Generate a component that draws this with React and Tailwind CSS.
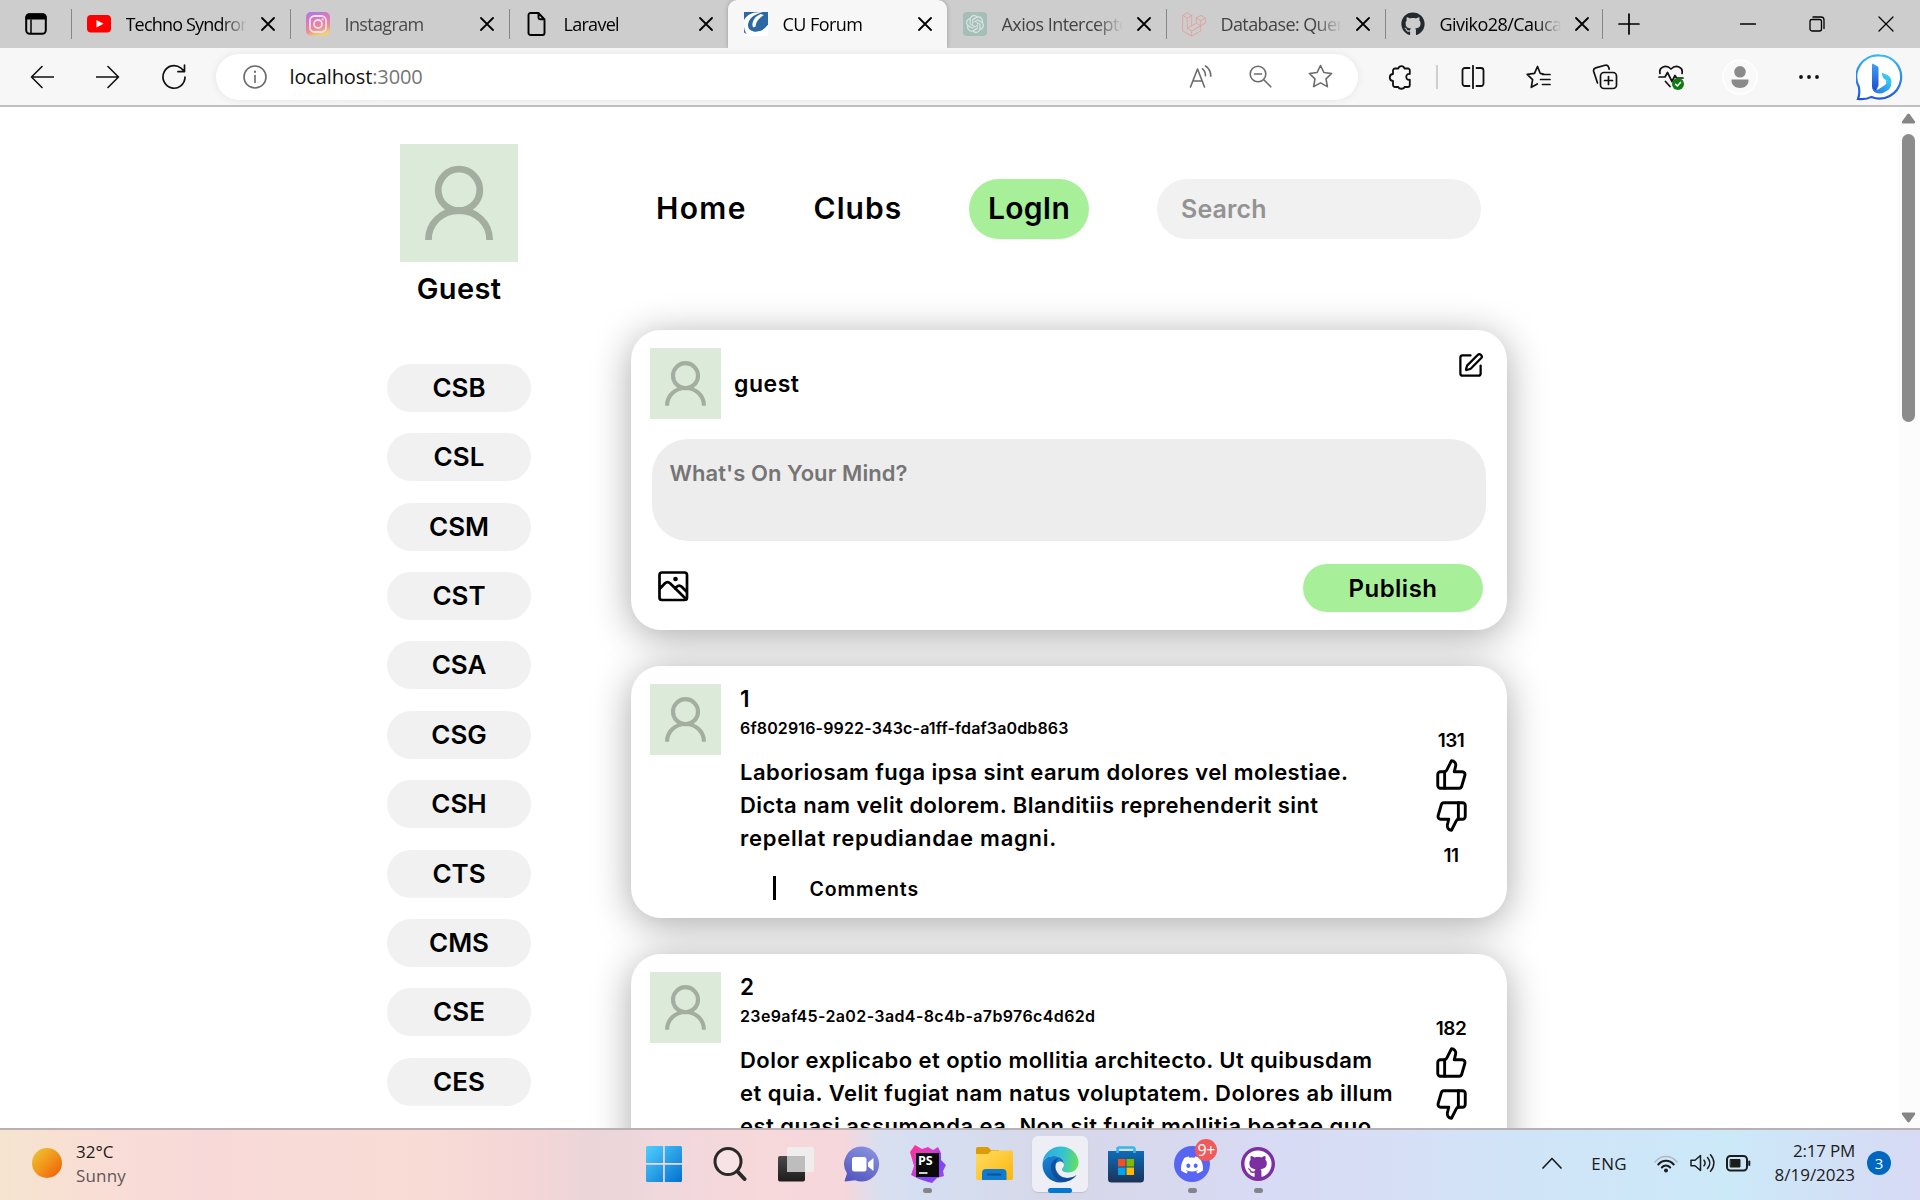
import React from "react";
import { SquarePen, ThumbsUp, ThumbsDown } from "lucide-react";
import { FaGithub, FaLaravel, FaDiscord } from "react-icons/fa";
import { SiOpenai } from "react-icons/si";

/* ---------- small shared drawings ---------- */

function Line({ children, w, h, box, sw = 1.7, className = "" }) {
  return (
    <svg
      width={w}
      height={h}
      viewBox={box || `0 0 ${w} ${h}`}
      fill="none"
      stroke="currentColor"
      strokeWidth={sw}
      strokeLinecap="round"
      strokeLinejoin="round"
      className={`block shrink-0 ${className}`}
    >
      {children}
    </svg>
  );
}

const Cross = () => (
  <Line w={14} h={14} sw={1.8} className="text-black">
    <path d="M1 1l12 12M13 1L1 13" />
  </Line>
);

function Avatar({ className }) {
  return (
    <svg viewBox="0 0 118 118" className={`block shrink-0 bg-[#dcead9] ${className}`} fill="none" stroke="#a3aea1" strokeWidth="6.8">
      <ellipse cx="59" cy="46" rx="20.8" ry="20.8" />
      <path d="M28.400 96c0-17 13.500-29.500 30.600-29.500s30.600 12.500 30.600 29.500" />
    </svg>
  );
}

/* ---------- browser chrome ---------- */

const YoutubeIcon = () => (
  <svg width="24" height="18" viewBox="0 0 24 18" className="block">
    <rect width="24" height="17.500" rx="4" fill="#f00" />
    <path d="M9.500 5l7 3.800-7 3.800z" fill="#fff" />
  </svg>
);

const InstagramIcon = () => (
  <svg width="24" height="24" viewBox="0 0 24 24" className="block">
    <defs>
      <linearGradient id="ig" x1="0.100" y1="0" x2="0.400" y2="1">
        <stop offset="0" stopColor="#a77be8" />
        <stop offset="0.450" stopColor="#e579b4" />
        <stop offset="0.750" stopColor="#ea8f93" />
        <stop offset="1" stopColor="#ecd07c" />
      </linearGradient>
    </defs>
    <rect width="24" height="24" rx="5" fill="url(#ig)" />
    <g fill="none" stroke="#f4dfe6" strokeWidth="1.800">
      <rect x="4" y="4" width="16" height="16" rx="4.500" />
      <circle cx="12" cy="12" r="4" />
    </g>
    <circle cx="16.600" cy="7.400" r="1.100" fill="#f4dfe6" />
  </svg>
);

const FileIcon = () => (
  <Line w={19} h={24} sw={1.9} className="text-black">
    <path d="M3.500 1h8l6 6.500V21a2 2 0 0 1-2 2h-12a2 2 0 0 1-2-2V3a2 2 0 0 1 2-2zM11.500 1v4.800a1.500 1.500 0 0 0 1.500 1.500h4.500" />
  </Line>
);

const ForumIcon = () => (
  <svg width="24" height="24" viewBox="0 0 24 24" className="block">
    <rect width="24" height="24" fill="#2c68a3" />
    <path d="M0 8C3 3 8 .5 14 .3h4.500C12 1.800 6.500 5 4.600 10c-1.700 4.500.2 8.600 4.600 9.300 4.500.7 9.300-.8 12-3.700L24 12.500V24H0v-3.500l3 1.700C1 20 0 17 0 13.500z" fill="#fff" />
    <path d="M24 0v12.500l-2.800 3.100c-2.700 2.900-7.500 4.400-12 3.700l3-2.300c4.500-1 7.300-8 8.600-13.800L22 0z" fill="#2c68a3" />
    <path d="M8.500 14C8 9 11 4 17 2l2.800 1.200C15 6 12 9.500 11.600 14.500c-1 1.300-2.700 1-3.100-.5z" fill="#fff" />
  </svg>
);

const AxiosIcon = () => (
  <span className="flex size-6 items-center justify-center rounded-[4px] bg-[#a4bfb7]">
    <SiOpenai className="size-[18px] text-[#dde5e2]" />
  </span>
);

const tabs = [
  { icon: <YoutubeIcon />, text: "Techno Syndrome", cls: "text-black tracking-[-0.045em]", sep: true },
  { icon: <InstagramIcon />, text: "Instagram", cls: "text-[#4a4a4a] tracking-[-0.036em]", sep: true },
  { icon: <FileIcon />, text: "Laravel", cls: "text-black tracking-[-0.040em]", sep: true },
  { icon: <ForumIcon />, text: "CU Forum", cls: "text-black tracking-[-0.030em]", active: true },
  { icon: <AxiosIcon />, text: "Axios Interceptors", cls: "text-[#444] tracking-[-0.030em]" },
  { icon: <FaLaravel className="size-[25px] text-[#e39d97]" />, text: "Database: Query", cls: "text-[#444] tracking-[-0.033em]", sep: true },
  { icon: <FaGithub className="size-6 text-[#24292e]" />, text: "Giviko28/Caucasus", cls: "text-black tracking-[-0.030em]", sep: true },
];

function Tab({ icon, text, cls, sep, active }) {
  return (
    <div
      className={`flex h-12 w-[219px] shrink-0 items-center last-of-type:w-[217px] ${active ? "rounded-t-[9px] bg-[#f7f7f7] shadow-[0_0_4px_rgba(0,0,0,0.25)]" : ""}`}
    >
      <span className={`h-[30px] w-[1.500px] ${sep ? "bg-[#858585]" : ""}`} />
      <span className="ml-[14.500px] flex w-6 justify-center">{icon}</span>
      <span
        className={`ml-[15px] w-[121px] overflow-hidden whitespace-nowrap text-[18px] leading-6 ${cls} [mask-image:linear-gradient(to_right,black_78%,transparent)]`}
      >
        {text}
      </span>
      <span className="ml-[14px]">
        <Cross />
      </span>
    </div>
  );
}

function TabBar() {
  return (
    <div className="flex h-12 items-center bg-[#cdcdcd]">
      <div className="flex w-[70.500px] shrink-0 pl-[25px]">
        <Line w={22} h={22} sw={2}>
          <rect x="1.200" y="1.200" width="19.600" height="19.600" rx="3.500" />
          <path d="M1.500 5.500V4a2.500 2.500 0 0 1 2.500-2.500h14A2.500 2.500 0 0 1 20.500 4v1.500z" fill="currentColor" />
          <path d="M6 7v13" strokeWidth="1.500" />
        </Line>
      </div>
      <div className="flex">
        {tabs.map((t) => (
          <Tab key={t.text} {...t} />
        ))}
      </div>
      <span className="h-[30px] w-[1.500px] bg-[#858585]" />
      <Line w={22} h={22} sw={1.7} className="ml-[15px]">
        <path d="M11 1v20M1 11h20" />
      </Line>
      <div className="ml-auto flex items-center pr-[26px]">
        <Line w={16} h={16} sw={1.3}>
          <path d="M.5 8h15" />
        </Line>
        <Line w={16} h={16} sw={1.3} className="ml-[53px]">
          <rect x="1" y="3.500" width="11.500" height="11.500" rx="2" />
          <path d="M4 1h8a3 3 0 0 1 3 3v8.500" />
        </Line>
        <Line w={16} h={16} sw={1.3} className="ml-[53px]">
          <path d="M1 1l14 14M15 1L1 15" />
        </Line>
      </div>
    </div>
  );
}

const BingIcon = () => (
  <svg width="48" height="50" viewBox="0 0 48 50" className="block">
    <defs>
      <linearGradient id="bingRing" x1="0.500" y1="0" x2="0.400" y2="1">
        <stop offset="0" stopColor="#35b8f4" />
        <stop offset="1" stopColor="#2156d9" />
      </linearGradient>
      <linearGradient id="bingStem" x1="0" y1="0" x2="0" y2="1">
        <stop offset="0" stopColor="#3ea2f2" />
        <stop offset="1" stopColor="#1d46cf" />
      </linearGradient>
      <linearGradient id="bingBowl" x1="1" y1="0.200" x2="0" y2="1">
        <stop offset="0" stopColor="#37c6ee" />
        <stop offset="1" stopColor="#2b6be6" />
      </linearGradient>
    </defs>
    <path d="M24 2.500a21.500 21.500 0 1 1-8.500 41.400C11.500 46 6.500 46.500 2 46c1.500-3.500 1.700-7 .9-12A21.500 21.500 0 0 1 24 2.500z" fill="#fff" stroke="url(#bingRing)" strokeWidth="2.200" />
    <path d="M16.500 10.500l5 2.700c.8.500 1 1 1 2v17l-3 7c-2-.8-3.500-3-3.500-6V11.500z" fill="url(#bingStem)" />
    <path d="M25.500 19.500l5.500 2.600c4 2 5.200 5.400 4 9.500-1.200-3-3-3.800-5.500-4.900-1.500-.6-2.200-1.500-2.700-3z" fill="#36c5f0" />
    <path d="M16.500 34c.7 3 3 4 6 2.300l6.500-4.200c1.800-1.400 1.600-3.400.4-5.400 4 1 6.300 3 5.600 6.200-1 3-3.500 4.700-6.500 6.400-3 1.700-6.500 1.500-9 .2-2-1.200-3-3.200-3-5.500z" fill="url(#bingBowl)" />
  </svg>
);

function Toolbar() {
  return (
    <div className="flex h-[59px] items-center border-b-2 border-[#bfbfbf] bg-[#f7f7f7] text-[#111]">
      <div className="flex w-[216px] shrink-0 items-center gap-[42px] pl-[30px]">
        <Line w={24} h={24} sw={1.6}>
          <path d="M12 1.500L1.500 12 12 22.500M1.500 12H23.500" />
        </Line>
        <Line w={24} h={24} sw={1.6}>
          <path d="M12 1.500L22.500 12 12 22.500M22.500 12H.500" />
        </Line>
        <Line w={25} h={26} sw={1.7}>
          <path d="M23 13A11 11.300 0 1 1 19 4.200l3.500 3.300M22.500 1v6.600h-6.600" />
        </Line>
      </div>
      <div className="flex h-[46px] w-[1142px] shrink-0 items-center rounded-full bg-white pl-[27px] pr-[25px] text-[#6b6b6b] shadow-[0_0_8px_rgba(0,0,0,0.08)]">
        <Line w={24} h={24} sw={1.6}>
          <circle cx="12" cy="12" r="11" />
          <path d="M12 10.500v7" />
          <path d="M12 6.500v.6" strokeWidth="2" />
        </Line>
        <span className="ml-[22.500px] text-[20px] leading-6 tracking-[-0.006em] text-[#757575]">
          <span className="text-[#111]">localhost</span>:3000
        </span>
        <div className="ml-auto flex items-center">
          <Line w={24} h={24} sw={1.6}>
            <path d="M1.500 22L8.500 4l7 18M4.200 16h8.600M13.500 3.800c2 1.500 3 4 3 7M16.500 1c3.500 2.300 5.300 6 5.300 10.300" />
          </Line>
          <Line w={23} h={23} sw={1.6} className="ml-9">
            <circle cx="9" cy="9" r="7.800" />
            <path d="M14.800 14.800l7 7M5.500 9h7" />
          </Line>
          <Line w={25} h={25} sw={1.6} className="ml-[36px]">
            <path d="M12.500 1.500l3.400 7 7.700 1-5.600 5.400 1.400 7.700-6.900-3.700-6.900 3.700L7 14.900 1.400 9.500l7.700-1z" />
          </Line>
        </div>
      </div>
      <div className="flex flex-1 items-center pl-[30px]">
        <Line w={25} h={26} sw={1.8}>
          <path d="M7 4.500h3.300a3.200 3.200 0 0 1 6.200 0H20a1.800 1.800 0 0 1 1.800 1.800V10c-4.500-1-5 6.600 0 5.700V21a2 2 0 0 1-2 2H16.500c-.5 2.300-5.700 2.300-6.200 0H7a2 2 0 0 1-2-2v-4.200c-4.300-.2-4.300-6.600 0-6.800V6.500a2 2 0 0 1 2-2z" />
        </Line>
        <span className="ml-[23px] h-6 w-[1.500px] bg-[#cfcfcf]" />
        <Line w={24} h={24} sw={1.8} className="ml-[23px]">
          <path d="M8.500 3H4a2.500 2.500 0 0 0-2.500 2.500v13A2.500 2.500 0 0 0 4 21h4.500M15.500 3H20a2.500 2.500 0 0 1 2.500 2.500v13A2.500 2.500 0 0 1 20 21h-4.500M12 .8v22.400" />
        </Line>
        <Line w={26} h={24} sw={1.7} className="ml-[41px]">
          <path d="M17.500 9l-3.300-.7L11.500 1.500 8.500 8.300l-7.300 1 5.400 5.300-1.300 7.700 6-3.400M16.500 9.500H24M14.500 14.500H24M16.500 19.500H24" />
        </Line>
        <Line w={26} h={26} sw={1.7} className="ml-[40px]">
          <rect x="8.500" y="8.500" width="16" height="16" rx="3.500" />
          <path d="M16.500 12.500v8M12.500 16.500h8M5.500 19l-3.800-11.500a3 3 0 0 1 2-3.600L13 1.200a3 3 0 0 1 3.700 2l.5 2" />
        </Line>
        <Line w={26} h={26} sw={1.7} className="ml-[40px]">
          <path d="M12 22.500L7.500 17.500M2 9.500C.5 3 8 0 13 5c5-5 12.500-2 11 4.500M1 13h6l2.500-4.500 4.500 9 3-6 1.500 2.500H25" />
          <circle cx="20" cy="20" r="6" fill="#107c10" stroke="none" />
          <path d="M17.500 20.200l1.800 1.800 3.200-3.600" stroke="#fff" strokeWidth="1.500" />
        </Line>
        <svg width="36" height="36" viewBox="0 0 36 36" className="ml-[38px] block">
          <circle cx="18" cy="18" r="17" fill="#f9f9f9" stroke="#fff" strokeWidth="1.500" />
          <circle cx="18" cy="12.800" r="5.800" fill="#8a8a8a" />
          <path d="M9.500 20.500h17v1.500c0 4.200-4 7-8.500 7s-8.500-2.800-8.500-7z" fill="#8a8a8a" />
        </svg>
        <svg width="22" height="6" viewBox="0 0 22 6" className="ml-[40px] block" fill="#111">
          <circle cx="3" cy="3" r="1.900" />
          <circle cx="11" cy="3" r="1.900" />
          <circle cx="19" cy="3" r="1.900" />
        </svg>
        <span className="mt-0.5 ml-[36px]">
          <BingIcon />
        </span>
      </div>
    </div>
  );
}

/* ---------- page ---------- */

const clubs = ["CSB", "CSL", "CSM", "CST", "CSA", "CSG", "CSH", "CTS", "CMS", "CSE", "CES"];

function Sidebar() {
  return (
    <aside className="flex w-36 shrink-0 flex-col items-center pt-[37px]">
      <Avatar className="size-[118px]" />
      <p className="mt-[11px] text-[29px] leading-8 tracking-[0.012em]">Guest</p>
      <ul className="mt-[58.700px] flex flex-col gap-[21.430px]">
        {clubs.map((c) => (
          <li key={c} className="flex h-12 w-36 items-center justify-center rounded-full bg-[#f1f1f1] text-[26px]">
            {c}
          </li>
        ))}
      </ul>
    </aside>
  );
}

function Nav() {
  return (
    <nav className="flex h-[60px] items-center text-[30px]">
      <a className="ml-[25px] w-[90px] pb-0.5 tracking-[0.045em]">Home</a>
      <a className="ml-[67.500px] w-[88px] pb-0.5 tracking-[0.036em]">Clubs</a>
      <a className="ml-[67.500px] flex h-[60px] w-[120px] items-center justify-center rounded-full bg-[#a8ef99] pb-0.5 tracking-[0.010em]">LogIn</a>
      <span className="ml-[68px] flex h-[60px] w-[324px] items-center rounded-full bg-[#f1f1f1] pl-6 text-[25px] tracking-[0.006em] text-[#939393]">Search</span>
    </nav>
  );
}

const card = "rounded-[30px] bg-white px-[18px] pb-[18px] shadow-[0_6px_38px_rgba(0,0,0,0.34)]";

function Composer() {
  return (
    <section className={`flex h-[300px] flex-col pt-[18px] ${card}`}>
      <header className="flex items-center pl-px">
        <Avatar className="size-[71px]" />
        <span className="ml-[13px] text-[23px] leading-7 tracking-[0.023em]">guest</span>
        <SquarePen className="mr-[5px] ml-auto mt-1 size-[27px] self-start" strokeWidth={2} />
      </header>
      <div className="mx-[3px] mt-5 h-[102px] rounded-[36px] bg-[#ededed] px-[17.500px] pt-5 text-[22px] leading-7 tracking-[0.003em] text-[#757575]">
        What's On Your Mind?
      </div>
      <footer className="mt-[23px] flex items-center justify-between pr-1.5 pl-[9px]">
        <Line w={31} h={31} box="0 0 31 31" sw={2.7} className="mb-1">
          <rect x="1.500" y="1.500" width="27.500" height="27.500" rx="2.500" />
          <path d="M2 17.500l5-5.200c1.500-1.400 3.500-1.400 5 0L28 28M17 17.500l1.700-1.700c1.500-1.400 3.500-1.400 5 0l5 5" />
          <circle cx="17.500" cy="8" r="1" fill="currentColor" />
        </Line>
        <button className="flex h-12 w-[180px] items-center justify-center rounded-full bg-[#a8ef99] pt-0.5 text-[24px] tracking-[0.020em]">
          Publish
        </button>
      </footer>
    </section>
  );
}

const posts = [
  {
    id: "1",
    uuid: "6f802916-9922-343c-a1ff-fdaf3a0db863",
    uuidCls: "tracking-[0.009em]",
    up: 131,
    down: 11,
    lines: [
      ["Laboriosam fuga ipsa sint earum dolores vel molestiae.", "tracking-[0.0204em]"],
      ["Dicta nam velit dolorem. Blanditiis reprehenderit sint", "tracking-[0.0202em]"],
      ["repellat repudiandae magni.", "tracking-[0.034em]"],
    ],
  },
  {
    id: "2",
    uuid: "23e9af45-2a02-3ad4-8c4b-a7b976c4d62d",
    uuidCls: "tracking-[0.0238em]",
    up: 182,
    down: 24,
    lines: [
      ["Dolor explicabo et optio mollitia architecto. Ut quibusdam", "tracking-[0.0203em]"],
      ["et quia. Velit fugiat nam natus voluptatem. Dolores ab illum", "tracking-[0.0235em]"],
      ["est quasi assumenda ea. Non sit fugit mollitia beatae quo", "tracking-[0.0215em]"],
    ],
  },
];

function Post({ id, uuid, uuidCls, up, down, lines }) {
  return (
    <article className={`flex h-[252px] shrink-0 pt-[18px] ${card}`}>
      <Avatar className="ml-px size-[71px]" />
      <div className="ml-[19px] flex w-[676px] flex-col whitespace-nowrap">
        <h2 className="mt-[3px] text-[22.500px] leading-6">{id}</h2>
        <p className={`mt-[7px] text-[16px] leading-5 ${uuidCls}`}>{uuid}</p>
        <div className="mt-[18px] text-[22px] leading-[33px]">
          {lines.map(([text, cls]) => (
            <p key={text} className={cls}>
              {text}
            </p>
          ))}
        </div>
        <div className="mt-[21px] ml-[33px] border-l-3 border-black pl-[33.500px] text-[19.500px] leading-6 tracking-[0.047em]">
          <span className="block translate-y-px">Comments</span>
        </div>
      </div>
      <div className="ml-[15px] flex w-10 flex-col items-center pt-[47px] text-[19px] leading-5 tracking-[-0.030em]">
        <span>{up}</span>
        <ThumbsUp className="mt-[6.500px] size-[33px]" strokeWidth={2.1} />
        <ThumbsDown className="mt-[9.500px] size-[33px]" strokeWidth={2.1} />
        <span className="mt-[13px]">{down}</span>
      </div>
    </article>
  );
}

function Scrollbar() {
  return (
    <div className="flex w-[22px] shrink-0 flex-col items-center bg-[#fcfcfc] pt-[6px] pr-0.5 pb-[5px]">
      <svg width="15" height="11" viewBox="0 0 15 11" className="block" fill="#858585">
        <path d="M6.300 1.200a1.500 1.500 0 0 1 2.400 0L14 8.500c.5 1 0 2-1 2H2c-1 0-1.500-1-1-2z" />
      </svg>
      <span className="mt-[10px] h-[288px] w-[13px] rounded-full bg-[#8b8b8b]" />
      <svg width="15" height="11" viewBox="0 0 15 11" className="mt-auto block" fill="#858585">
        <path d="M6.300 9.800a1.500 1.500 0 0 0 2.400 0L14 2.500c.5-1 0-2-1-2H2c-1 0-1.500 1-1 2z" />
      </svg>
    </div>
  );
}

/* ---------- task bar ---------- */

const StartIcon = () => (
  <svg width="36" height="36" viewBox="0 0 36 36" className="block">
    <defs>
      <linearGradient id="win" gradientUnits="userSpaceOnUse" x1="0" y1="0" x2="36" y2="36">
        <stop offset="0" stopColor="#4fd0ff" />
        <stop offset="1" stopColor="#0470cf" />
      </linearGradient>
    </defs>
    <path d="M1.500 0h15.600v17.100H0V1.500A1.500 1.500 0 0 1 1.500 0zM18.800 0h15.700A1.500 1.500 0 0 1 36 1.500v15.600H18.800zM0 18.800h17.100V36H1.500A1.500 1.500 0 0 1 0 34.500zM18.800 18.800H36v15.700a1.500 1.500 0 0 1-1.500 1.500H18.800z" fill="url(#win)" />
  </svg>
);

const SearchIcon = () => (
  <svg width="34" height="36" viewBox="0 0 34 36" className="block" fill="none" stroke="#292929">
    <circle cx="15" cy="15.500" r="13" strokeWidth="3" fill="#ffffff" fillOpacity="0.250" />
    <path d="M24.500 25.500l7 7.500" strokeWidth="4" strokeLinecap="round" />
  </svg>
);

const TaskViewIcon = () => (
  <svg width="36" height="36" viewBox="0 0 36 36" className="block">
    <defs>
      <linearGradient id="tv" x1="0" y1="0" x2="0" y2="1">
        <stop offset="0" stopColor="#4a4a4a" />
        <stop offset="1" stopColor="#1d1d1d" />
      </linearGradient>
    </defs>
    <rect x="0" y="10" width="27" height="25.500" rx="2" fill="url(#tv)" />
    <rect x="9" y="1" width="27" height="25" rx="2" fill="#f0f0f0" fillOpacity="0.900" />
    <rect x="9" y="10" width="18" height="16" fill="#bdbdbd" />
  </svg>
);

const ChatIcon = () => (
  <svg width="36" height="36" viewBox="0 0 36 36" className="block">
    <defs>
      <linearGradient id="chat" x1="0.800" y1="0" x2="0.300" y2="1">
        <stop offset="0" stopColor="#8b93e0" />
        <stop offset="1" stopColor="#5557c0" />
      </linearGradient>
    </defs>
    <path d="M18 .500A17.500 17.500 0 1 1 11 34.200L1.500 35.500c-.6 0-1-.5-.8-1.200L3 27.500A17.500 17.500 0 0 1 18 .500z" fill="url(#chat)" />
    <rect x="8" y="11" width="14.500" height="14.500" rx="2.500" fill="#fff" />
    <path d="M24 16.500l5.500-4.500v13L24 20.500z" fill="#fff" />
  </svg>
);

const StormIcon = () => (
  <svg width="38" height="38" viewBox="0 0 38 38" className="block">
    <defs>
      <linearGradient id="ps" x1="0" y1="0" x2="1" y2="1">
        <stop offset="0" stopColor="#ff318c" />
        <stop offset="0.400" stopColor="#d63ed0" />
        <stop offset="0.650" stopColor="#7a45f5" />
        <stop offset="1" stopColor="#b345f1" />
      </linearGradient>
    </defs>
    <path d="M1 7L6 0l7 4 6-2 5 3 5-3 3 6v7l5 5-3 6 1 5-7 2-5 5-4-1-9-3-8-4 3-9z" fill="url(#ps)" />
    <rect x="7" y="8" width="23" height="24" fill="#0a0a0a" />
    <text x="9" y="20" fontFamily="Open Sans, sans-serif" fontWeight="700" fontSize="12.500" fill="#fff">PS</text>
    <path d="M10 28h8.500" stroke="#fff" strokeWidth="1.600" />
  </svg>
);

const FolderIcon = () => (
  <svg width="37" height="34" viewBox="0 0 37 34" className="block">
    <defs>
      <linearGradient id="fold" x1="0" y1="0" x2="1" y2="1">
        <stop offset="0" stopColor="#ffdd63" />
        <stop offset="1" stopColor="#fbb50b" />
      </linearGradient>
    </defs>
    <path d="M0 2a2 2 0 0 1 2-2h9c1.500 0 2.500 1.500 4 3h8v8H0z" fill="#dd9c06" />
    <path d="M0 7h12l3.500-3.500H35a2 2 0 0 1 2 2V31a2 2 0 0 1-2 2H2a2 2 0 0 1-2-2z" fill="url(#fold)" />
    <path d="M6 33v-7a4 4 0 0 1 4-4h16.500a4 4 0 0 1 4 4v7z" fill="#0f7bd0" />
    <path d="M12 27.500h12.500" stroke="#0a5294" strokeWidth="2" strokeLinecap="round" />
  </svg>
);

const EdgeIcon = () => (
  <svg width="37" height="37" viewBox="0 0 37 37" className="block">
    <defs>
      <linearGradient id="edgeTop" x1="0" y1="0.400" x2="1" y2="0.500">
        <stop offset="0" stopColor="#2aa9de" />
        <stop offset="0.550" stopColor="#35c3d0" />
        <stop offset="1" stopColor="#66e05c" />
      </linearGradient>
      <linearGradient id="edgeLow" x1="0" y1="0" x2="0.700" y2="1">
        <stop offset="0" stopColor="#1b87d8" />
        <stop offset="1" stopColor="#0c4f9f" />
      </linearGradient>
    </defs>
    <path d="M.600 17A18 18 0 0 1 18.500.500C29 .500 36.500 8 36.500 16.500c0 6-4.500 10-10 10-4 0-6.500-1.300-6.500-3 0-1.500 2-2 2-5.500 0-4.500-4.500-8-10-8C6 10 1.500 13 .600 17z" fill="url(#edgeTop)" />
    <path d="M.500 18.500C.800 13 6 10 12 10c5.500 0 10 3.500 10 8-1-2-2.500-2.500-4-2.500-4 0-5.500 4-4.500 8 1.200 5 6 8.500 11.500 8.500 3.500 0 7-1.200 9.500-3C31 33.500 25 36.500 18.500 36.500 8 36.500.500 28.500.500 18.500z" fill="url(#edgeLow)" />
    <path d="M9 20c.5-4.500 4-7.500 7.500-7.500-2 1.500-3.500 5-3 9 .8 5.800 6 10.500 12 10.500 3.500 0 7-1.200 9-3-3 4.500-8 6.500-12.500 6.500C14 35.500 8.400 27 9 20z" fill="#0b4a94" fillOpacity="0.750" />
  </svg>
);

const StoreIcon = () => (
  <svg width="36" height="37" viewBox="0 0 36 37" className="block">
    <defs>
      <linearGradient id="store" x1="0" y1="0" x2="0" y2="1">
        <stop offset="0" stopColor="#0e6cb8" />
        <stop offset="1" stopColor="#1c3258" />
      </linearGradient>
    </defs>
    <path d="M9.500 7V3a1.500 1.500 0 0 1 1.500-1.500h14A1.500 1.500 0 0 1 26.500 3v4" fill="none" stroke="#36b6ee" strokeWidth="2.600" />
    <path d="M0 5h36v28a3.500 3.500 0 0 1-3.500 3.500h-29A3.500 3.500 0 0 1 0 33z" fill="url(#store)" />
    <path d="M9.500 7V4.500M26.500 7V4.500" stroke="#36b6ee" strokeWidth="2.600" />
    <rect x="10" y="13" width="7.500" height="7.500" fill="#f25022" />
    <rect x="18.500" y="13" width="7.500" height="7.500" fill="#7fba00" />
    <rect x="10" y="21.500" width="7.500" height="7.500" fill="#00a4ef" />
    <rect x="18.500" y="21.500" width="7.500" height="7.500" fill="#ffb900" />
  </svg>
);

const DiscordIcon = () => (
  <span className="relative flex size-9 items-center justify-center rounded-full bg-[#5865f2]">
    <FaDiscord className="mt-0.5 size-6 text-white" />
    <span className="absolute -top-[7px] -right-[7px] flex size-[22px] items-center justify-center rounded-full bg-[#f05a5a] text-[16px] leading-none tracking-tight text-white">
      9+
    </span>
  </span>
);

const GithubDesktopIcon = () => (
  <span className="flex size-[34px] items-center justify-center rounded-full bg-[#7b2fa0]">
    <FaGithub className="size-7 text-white" />
  </span>
);

const apps = [
  { name: "start", icon: <StartIcon /> },
  { name: "search", icon: <SearchIcon /> },
  { name: "tasks", icon: <TaskViewIcon /> },
  { name: "chat", icon: <ChatIcon /> },
  { name: "phpstorm", icon: <StormIcon />, open: true },
  { name: "files", icon: <FolderIcon /> },
  { name: "edge", icon: <EdgeIcon />, active: true },
  { name: "store", icon: <StoreIcon /> },
  { name: "discord", icon: <DiscordIcon />, open: true },
  { name: "github", icon: <GithubDesktopIcon />, open: true },
];

function Taskbar() {
  return (
    <footer className="flex h-[72px] shrink-0 border-t-2 border-[#b9b0b4] bg-[linear-gradient(90deg,#f6e4cf_0px,#f9ddd6_110px,#f8d9d9_200px,#f9dcd5_400px,#f5d6d7_520px,#ead5d9_600px,#f0d8dc_660px,#f7d8db_760px,#f5d7dc_845px,#d9dfef_880px,#d5dff2_920px,#d5ddef_960px,#d6d7e8_1060px,#d8daf3_1240px,#d6dff5_1400px,#d0e4f8_1520px,#cce9f8_1730px,#d2e0f6_1840px,#d7daf4_1920px)] text-[17px] leading-6 text-[#1c1c1c]">
      <div className="flex w-[630.500px] shrink-0 pl-8 pt-[17px]">
        <span className="mt-px size-[30px] rounded-full bg-[linear-gradient(135deg,#ecc435_5%,#f29a1c_45%,#f06a0d_85%)]" />
        <div className="-mt-[7px] ml-[14px]">
          <p>32°C</p>
          <p className="text-[#5f5857] tracking-[0.010em]">Sunny</p>
        </div>
      </div>
      <div className="flex">
        {apps.map(({ name, icon, open, active }) => (
          <div key={name} className="flex w-[66.100px] flex-col items-center pt-1.5">
            <div className={`flex h-14 w-14 flex-col items-center rounded-md ${active ? "bg-[#edeef6] shadow-[0_1px_1px_rgba(0,0,0,0.12)]" : ""}`}>
              <span className="flex h-[56px] shrink-0 items-center">{icon}</span>
              {open && <span className="-mt-[4px] h-[5px] w-[9px] shrink-0 rounded-full bg-[#83848c]" />}
              {active && <span className="-mt-[4px] h-[5px] w-6 shrink-0 rounded-full bg-[#0078d4]" />}
            </div>
          </div>
        ))}
      </div>
      <div className="ml-auto flex items-center pr-[29px] pb-1">
        <Line w={20} h={12} sw={1.7}>
          <path d="M1 11l9-9.500 9 9.500" />
        </Line>
        <span className="ml-[29px] pt-0.5 tracking-[0.020em]">ENG</span>
        <Line w={24} h={19} sw={2} className="ml-[27px]">
          <path d="M1 8C7 .500 17 .500 23 8" stroke="#a9b9c6" strokeWidth="1.500" />
          <path d="M4.300 10.500c4.200-5 11.200-5 15.400 0M7.800 13.500c2.300-2.700 6-2.700 8.400 0" />
          <circle cx="12" cy="16.500" r="1.300" fill="currentColor" strokeWidth="1.300" />
        </Line>
        <Line w={25} h={20} sw={1.5} className="ml-3">
          <path d="M1 7.200h4L10.500 2.500v15L5 12.800H1zM14 7.200c1.300 1.700 1.300 4 0 5.600M17.500 4.500c3 3.300 3 7.700 0 11M20.500 1.800c4.500 5 4.500 11.400 0 16.400" />
        </Line>
        <Line w={25} h={17} sw={2} className="ml-[11px]">
          <rect x="1" y="1" width="20" height="14.500" rx="3.500" />
          <rect x="4.500" y="4.500" width="9.500" height="7.500" fill="currentColor" stroke="currentColor" strokeWidth="1" />
          <path d="M23.300 6.500v3.500" />
        </Line>
        <div className="ml-[23px] w-[81px] text-right">
          <p className="tracking-[-0.013em]">2:17 PM</p>
          <p>8/19/2023</p>
        </div>
        <span className="ml-3 flex size-6 items-center justify-center rounded-full bg-[#0067c0] text-[15px] text-white">3</span>
      </div>
    </footer>
  );
}

export default function App() {
  return (
    <div className="flex h-[1200px] w-[1920px] flex-col overflow-hidden bg-white font-['Open_Sans',sans-serif]">
      <TabBar />
      <Toolbar />
      <div className="flex min-h-0 flex-1 overflow-hidden bg-white">
        <div className="flex flex-1 pl-[387px] font-['Inter',sans-serif] font-semibold leading-none text-black">
          <Sidebar />
          <main className="ml-[100px] flex w-[876px] flex-col pt-[72px]">
            <Nav />
            <div className="mt-[91px] flex flex-col gap-9">
              <Composer />
              {posts.map((p) => (
                <Post key={p.id} {...p} />
              ))}
            </div>
          </main>
        </div>
        <Scrollbar />
      </div>
      <Taskbar />
    </div>
  );
}
